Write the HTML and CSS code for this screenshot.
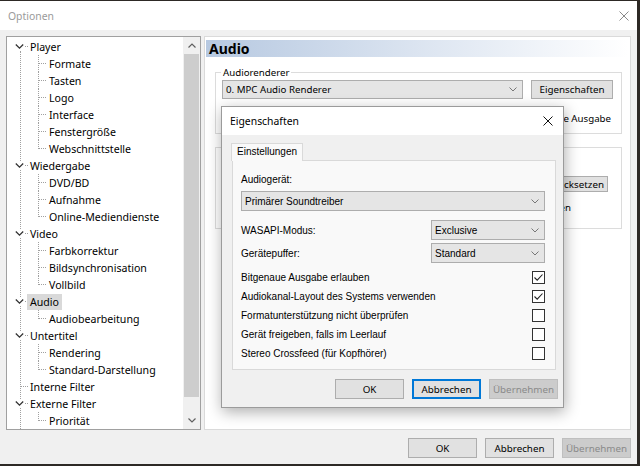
FILE: index.html
```html
<!DOCTYPE html>
<html lang="de">
<head>
<meta charset="utf-8">
<title>Optionen</title>
<link rel="stylesheet" href="styles.css">
</head>
<body>
<div class="window">
  <div class="titlebar">
    <span class="title">Optionen</span>
    <svg class="win-close" width="10" height="10" viewBox="0 0 10 10"><path d="M0.5 0.5 L9.5 9.5 M9.5 0.5 L0.5 9.5" stroke="#8a8a8a" stroke-width="1" fill="none"/></svg>
  </div>

  <div class="main">
    <div class="tree">
      <div class="tree-list">
        <div class="row l1"><svg class="chev" viewBox="0 0 9 9"><path d="M0.8 2.5 L4.5 6.2 L8.2 2.5" stroke="#333" stroke-width="1.3" fill="none"/></svg><span class="label">Player</span></div>
        <div class="children">
          <div class="row l2"><span class="label">Formate</span></div>
          <div class="row l2"><span class="label">Tasten</span></div>
          <div class="row l2"><span class="label">Logo</span></div>
          <div class="row l2"><span class="label">Interface</span></div>
          <div class="row l2"><span class="label">Fenstergröße</span></div>
          <div class="row l2"><span class="label">Webschnittstelle</span></div>
        </div>
        <div class="row l1"><svg class="chev" viewBox="0 0 9 9"><path d="M0.8 2.5 L4.5 6.2 L8.2 2.5" stroke="#333" stroke-width="1.3" fill="none"/></svg><span class="label">Wiedergabe</span></div>
        <div class="children">
          <div class="row l2"><span class="label">DVD/BD</span></div>
          <div class="row l2"><span class="label">Aufnahme</span></div>
          <div class="row l2"><span class="label">Online-Mediendienste</span></div>
        </div>
        <div class="row l1"><svg class="chev" viewBox="0 0 9 9"><path d="M0.8 2.5 L4.5 6.2 L8.2 2.5" stroke="#333" stroke-width="1.3" fill="none"/></svg><span class="label">Video</span></div>
        <div class="children">
          <div class="row l2"><span class="label">Farbkorrektur</span></div>
          <div class="row l2"><span class="label">Bildsynchronisation</span></div>
          <div class="row l2"><span class="label">Vollbild</span></div>
        </div>
        <div class="row l1"><svg class="chev" viewBox="0 0 9 9"><path d="M0.8 2.5 L4.5 6.2 L8.2 2.5" stroke="#333" stroke-width="1.3" fill="none"/></svg><span class="label selected">Audio</span></div>
        <div class="children">
          <div class="row l2"><span class="label">Audiobearbeitung</span></div>
        </div>
        <div class="row l1"><svg class="chev" viewBox="0 0 9 9"><path d="M0.8 2.5 L4.5 6.2 L8.2 2.5" stroke="#333" stroke-width="1.3" fill="none"/></svg><span class="label">Untertitel</span></div>
        <div class="children">
          <div class="row l2"><span class="label">Rendering</span></div>
          <div class="row l2"><span class="label">Standard-Darstellung</span></div>
        </div>
        <div class="row l1 leaf"><span class="chev-space"></span><span class="label">Interne Filter</span></div>
        <div class="row l1"><svg class="chev" viewBox="0 0 9 9"><path d="M0.8 2.5 L4.5 6.2 L8.2 2.5" stroke="#333" stroke-width="1.3" fill="none"/></svg><span class="label">Externe Filter</span></div>
        <div class="children">
          <div class="row l2"><span class="label">Priorität</span></div>
        </div>
      </div>
      <div class="scrollbar">
        <div class="sb-arrow"><svg width="8" height="5" viewBox="0 0 8 5"><path d="M0.5 4.5 L4 1 L7.5 4.5" stroke="#606060" stroke-width="1.2" fill="none"/></svg></div>
        <div class="sb-thumb"></div>
        <div class="sb-track"></div>
        <div class="sb-arrow"><svg width="8" height="5" viewBox="0 0 8 5"><path d="M0.5 0.5 L4 4 L7.5 0.5" stroke="#606060" stroke-width="1.2" fill="none"/></svg></div>
      </div>
    </div>

    <div class="page">
      <div class="page-header">Audio</div>
      <div class="group g1">
        <span class="group-label">Audiorenderer</span>
        <div class="renderer-row">
          <div class="combo renderer"><span>0. MPC Audio Renderer</span><svg class="combo-arrow" width="8" height="5" viewBox="0 0 8 5"><path d="M0.5 0.5 L4 4 L7.5 0.5" stroke="#777" stroke-width="1" fill="none"/></svg></div>
          <button class="btn props">Eigenschaften</button>
        </div>
        <div class="hidden-row">
          <span class="cb"></span><span>Duale Ausgabe</span>
        </div>
      </div>
      <div class="group g2">
        <div class="reset-row"><button class="btn small">Zurücksetzen</button></div>
        <div class="shift-row"><span>Audio-Zeitverschiebung aktivieren</span></div>
      </div>
    </div>
  </div>

  <div class="footer">
    <button class="btn">OK</button>
    <button class="btn">Abbrechen</button>
    <button class="btn disabled">Übernehmen</button>
  </div>

  <div class="dialog">
    <div class="dlg-title">
      <span>Eigenschaften</span>
      <svg width="10" height="10" viewBox="0 0 10 10"><path d="M0.5 0.5 L9.5 9.5 M9.5 0.5 L0.5 9.5" stroke="#111" stroke-width="1" fill="none"/></svg>
    </div>
    <div class="dlg-body">
      <div class="tabs"><span class="tab">Einstellungen</span></div>
      <div class="tabpanel">
        <div class="field-label">Audiogerät:</div>
        <div class="combo device"><span>Primärer Soundtreiber</span><svg class="combo-arrow" width="8" height="5" viewBox="0 0 8 5"><path d="M0.5 0.5 L4 4 L7.5 0.5" stroke="#777" stroke-width="1" fill="none"/></svg></div>
        <div class="opt-row first">
          <span>WASAPI-Modus:</span>
          <div class="combo small-combo"><span>Exclusive</span><svg class="combo-arrow" width="8" height="5" viewBox="0 0 8 5"><path d="M0.5 0.5 L4 4 L7.5 0.5" stroke="#777" stroke-width="1" fill="none"/></svg></div>
        </div>
        <div class="opt-row">
          <span>Gerätepuffer:</span>
          <div class="combo small-combo"><span>Standard</span><svg class="combo-arrow" width="8" height="5" viewBox="0 0 8 5"><path d="M0.5 0.5 L4 4 L7.5 0.5" stroke="#777" stroke-width="1" fill="none"/></svg></div>
        </div>
        <div class="checks">
          <div class="check-row"><span>Bitgenaue Ausgabe erlauben</span><span class="cb"><svg width="11" height="11" viewBox="0 0 11 11"><path d="M1.5 5.5 L4.2 8.2 L9.5 2.5" stroke="#222" stroke-width="1.1" fill="none"/></svg></span></div>
          <div class="check-row"><span>Audiokanal-Layout des Systems verwenden</span><span class="cb"><svg width="11" height="11" viewBox="0 0 11 11"><path d="M1.5 5.5 L4.2 8.2 L9.5 2.5" stroke="#222" stroke-width="1.1" fill="none"/></svg></span></div>
          <div class="check-row"><span>Formatunterstützung nicht überprüfen</span><span class="cb"></span></div>
          <div class="check-row"><span>Gerät freigeben, falls im Leerlauf</span><span class="cb"></span></div>
          <div class="check-row"><span>Stereo Crossfeed (für Kopfhörer)</span><span class="cb"></span></div>
        </div>
      </div>
      <div class="dlg-buttons">
        <button class="btn">OK</button>
        <button class="btn focused">Abbrechen</button>
        <button class="btn disabled">Übernehmen</button>
      </div>
    </div>
  </div>
</div>
</body>
</html>
```

FILE: styles.css
```css
* { box-sizing: border-box; }
html, body { margin: 0; padding: 0; }
body {
  background: #2d2925;
  width: 640px;
  height: 466px;
  overflow: hidden;
  font-family: "Noto Sans", sans-serif;
  font-size: 11px;
  color: #000;
}
.window {
  margin-top: 1px;
  width: 637px;
  height: 463px;
  background: #f0f0f0;
  position: relative;
  display: flex;
  flex-direction: column;
}
.titlebar {
  height: 29px;
  flex: none;
  background: #fff;
  display: flex;
  align-items: center;
  justify-content: space-between;
  padding: 0 8px 0 8px;
}
.title { color: #9a9a9a; font-size: 10.4px; }
.win-close { display: block; }

.main {
  display: flex;
  gap: 3px;
  padding: 6px 6px 0 6px;
  height: 400px;
  flex: none;
}

/* tree */
.tree {
  width: 196px;
  height: 394px;
  border: 1px solid #a0a0a0;
  background: #fff;
  display: flex;
  overflow: hidden;
  font-size: 10.6px;
}
.tree-list {
  flex: 1;
  position: relative;
  padding-top: 1px;
}
.tree-list::before {
  content: "";
  position: absolute;
  left: 13px;
  top: 14px;
  bottom: 0;
  border-left: 1px dotted #a0a0a0;
}
.row {
  height: 17px;
  display: flex;
  align-items: center;
  position: relative;
  white-space: nowrap;
}
.l1 { padding-left: 8px; }
.l1::after {
  content: "";
  position: absolute;
  left: 18px;
  top: 8px;
  width: 3px;
  border-top: 1px dotted #a0a0a0;
}
.l1.leaf::after { left: 14px; width: 7px; }
.chev {
  width: 9px;
  height: 9px;
  background: #fff;
  position: relative;
  z-index: 1;
  flex: none;
}
.chev-space { width: 9px; flex: none; }
.label {
  margin-left: 3px;
  padding: 0 3px;
  line-height: 16px;
  position: relative;
  z-index: 1;
}
.label.selected { background: #d9d9d9; }
.l2 { padding-left: 36px; }
.l2::before {
  content: "";
  position: absolute;
  left: 31px;
  top: 0;
  height: 100%;
  border-left: 1px dotted #a0a0a0;
}
.l2:last-child::before { height: 9px; }
.l2::after {
  content: "";
  position: absolute;
  left: 32px;
  top: 8px;
  width: 7px;
  border-top: 1px dotted #a0a0a0;
}

.scrollbar {
  width: 17px;
  flex: none;
  background: #f0f0f0;
  display: flex;
  flex-direction: column;
}
.sb-arrow {
  height: 17px;
  flex: none;
  display: flex;
  align-items: center;
  justify-content: center;
}
.sb-thumb {
  height: 343px;
  flex: none;
  margin: 0 1px;
  background: #cdcdcd;
}
.sb-track { flex: 1; }

/* right page */
.page {
  flex: 1;
  height: 394px;
  border: 1px solid #dadada;
  background: #fff;
  padding: 3px 2px 0 1px;
  display: flex;
  flex-direction: column;
  font-size: 9.7px;
}
.page-header {
  height: 17px;
  line-height: 17px;
  padding-left: 3px;
  font-size: 14px;
  font-weight: bold;
  background: linear-gradient(to right, #b7c9e1 0%, #dfe7f2 55%, #ffffff 100%);
}
.group {
  border: 1px solid #dcdcdc;
  margin: 15px 6px 0 9px;
  display: flex;
  flex-direction: column;
}
.group-label {
  align-self: flex-start;
  margin: -7px 0 0 5px;
  padding: 0 2px;
  background: #fff;
  line-height: 13px;
}
.renderer-row {
  display: flex;
  gap: 8px;
  margin-top: 1px;
  padding: 0 8px 0 6px;
}
.combo {
  display: flex;
  align-items: center;
  justify-content: space-between;
  height: 20px;
  border: 1px solid #adadad;
  background: #e5e5e5;
  padding: 0 5px 0 3px;
  white-space: nowrap;
}
.combo-arrow { flex: none; }
.renderer { width: 301px; height: 19px; }
.btn {
  font-family: "Noto Sans", sans-serif;
  font-size: 9.8px;
  color: #000;
  height: 20px;
  width: 69px;
  padding: 0;
  border: 1px solid #adadad;
  background: #e1e1e1;
  white-space: nowrap;
}
.btn.props { width: 82px; height: 19px; }
.btn.disabled { background: #cccccc; border-color: #bfbfbf; color: #8a8a8a; }
.btn.focused { border: 2px solid #0078d7; }
.hidden-row {
  height: 17px;
  margin-top: 11px;
  margin-bottom: 6px;
  display: flex;
  align-items: center;
  justify-content: flex-end;
  gap: 4px;
  padding-right: 10px;
}
.g1 .hidden-row .cb { margin-right: 2px; }
.g2 { margin-top: 13px; padding: 28px 13px 13px 8px; }
.reset-row { display: flex; justify-content: flex-end; }
.btn.small { width: auto; height: 16px; padding: 0 3px; line-height: 13px; }
.shift-row {
  height: 16px;
  margin-top: 7px;
  display: flex;
  align-items: center;
  justify-content: flex-end;
  padding-right: 37px;
  white-space: nowrap;
}

/* footer */
.footer {
  display: flex;
  justify-content: flex-end;
  gap: 8px;
  padding: 8px 6px 0 0;
}

/* dialog */
.dialog {
  position: absolute;
  left: 221px;
  top: 105px;
  width: 343px;
  height: 302px;
  border: 1px solid #9b9b9b;
  background: #f0f0f0;
  box-shadow: 1px 4px 14px rgba(0, 0, 0, 0.32);
  display: flex;
  flex-direction: column;
  z-index: 5;
}
.dlg-title {
  height: 28px;
  flex: none;
  background: #fff;
  display: flex;
  align-items: center;
  justify-content: space-between;
  padding: 0 10px 0 8px;
  font-size: 10.4px;
}
.dlg-title svg { display: block; }
.dlg-body {
  flex: 1;
  padding: 8px 7px 8px 10px;
  display: flex;
  flex-direction: column;
  font-family: "Liberation Sans", Arial, sans-serif;
  font-size: 10px;
}
.tabs { display: flex; height: 17px; flex: none; }
.tab {
  margin-left: -1px;
  height: 18px;
  border: 1px solid #d9d9d9;
  border-bottom: none;
  background: #f9f9f9;
  padding: 0 5px;
  line-height: 16px;
  position: relative;
  z-index: 1;
}
.tabpanel {
  height: 210px;
  flex: none;
  border: 1px solid #d9d9d9;
  background: #f9f9f9;
  padding: 12px 10px 0 8px;
  display: flex;
  flex-direction: column;
}
.field-label { line-height: 13px; margin-bottom: 5px; }
.device { width: 304px; }
.opt-row {
  display: flex;
  align-items: center;
  justify-content: space-between;
  margin-top: 3px;
}
.opt-row.first { margin-top: 9px; }
.small-combo { width: 114px; }
.checks { margin-top: 5px; display: flex; flex-direction: column; }
.check-row {
  height: 19px;
  display: flex;
  align-items: center;
  justify-content: space-between;
}
.cb {
  width: 13px;
  height: 13px;
  border: 1px solid #333;
  background: #fff;
  display: flex;
  align-items: center;
  justify-content: center;
  flex: none;
}
.cb svg { display: block; }
.dlg-buttons {
  display: flex;
  justify-content: flex-end;
  gap: 8px;
  margin: 9px -2px 0 0;
}
```
